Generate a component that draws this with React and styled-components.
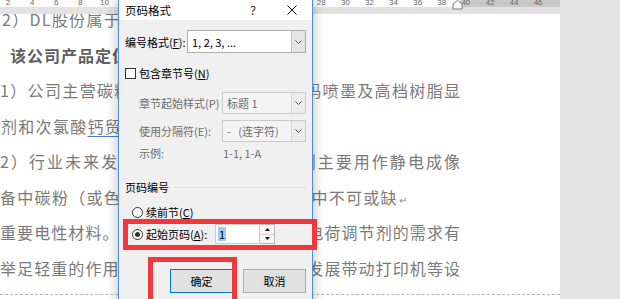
import React from "react";
import styled, { createGlobalStyle } from "styled-components";

const GlobalStyle = createGlobalStyle`
  html, body {
    margin: 0;
    padding: 0;
  }
  body {
    width: 620px;
    height: 299px;
    overflow: hidden;
    background: #e3e3e3;
  }
`

const cjk = `"Noto Sans CJK SC", "Noto Sans", sans-serif`

const Screen = styled.div`
  position: relative;
  width: 620px;
  height: 299px;
  overflow: hidden;
  background: #e3e3e3;
  font-family: ${cjk};
`

const Workspace = styled.div`
  display: flex;
  flex-direction: column;
  width: 560px;
  height: 100%;
`

const Ruler = styled.div`
  flex: none;
  display: flex;
  align-items: flex-start;
  height: 7px;
  overflow: hidden;
  background: linear-gradient(to right, #fcfcfc 0 460px, #c8c8c8 460px 100%);
`

const RulerNumber = styled.span`
  flex: none;
  width: 24.1px;
  margin-left: ${props => props.$first ? '-4px' : '0'};
  text-align: center;
  font-family: "Liberation Sans", sans-serif;
  font-size: 8px;
  line-height: 5px;
  color: #6a6a6a;
`

const IndentMarker = styled.svg`
  position: absolute;
  left: 452px;
  top: 0;
`

const RulerBand = styled.div`
  flex: none;
  height: 7px;
  background: #e2e2e2;
`

const Page = styled.div`
  flex: 1;
  display: flex;
  flex-direction: column;
  background: #fff;
  overflow: hidden;
`

const TextColumn = styled.div`
  display: flex;
  flex-direction: column;
  width: 460px;
  margin-top: -12px;
`

const DocLine = styled.div`
  flex: none;
  height: 35.5px;
  line-height: 35.5px;
  overflow: hidden;
  padding-left: ${props => props.$indent || 0}px;
  font-size: 16px;
  font-weight: ${props => props.$bold ? 700 : 400};
  color: ${props => props.$bold ? '#5e5e5e' : '#7a7a7a'};
  letter-spacing: ${props => props.$full ? '0' : (props.$spacing ?? 1.3) + 'px'};
  white-space: ${props => props.$full ? 'normal' : 'nowrap'};
  text-align: ${props => props.$full ? 'justify' : 'left'};
  text-align-last: ${props => props.$full ? 'justify' : 'auto'};
  text-justify: inter-character;
`

const Marked = styled.span`
  text-decoration: underline;
  text-decoration-color: #4a74d8;
  text-underline-offset: 3px;
`

const ReturnMark = styled.span`
  font-size: 10px;
  color: #8a8a8a;
  margin-left: 1px;
`

const DashedRule = styled.div`
  margin-top: 8px;
  width: 560px;
  border-top: 1px dashed #b4b4b4;
`

const Dialog = styled.div`
  position: absolute;
  left: 118px;
  top: -1px;
  width: 195px;
  height: 312px;
  box-sizing: border-box;
  display: flex;
  flex-direction: column;
  border: 1px solid #4d8fdb;
  background: #f0f0f0;
  box-shadow: 0 0 12px rgba(0, 0, 0, 0.28);
  font-size: 11px;
  color: #000;
`

const TitleBar = styled.div`
  flex: none;
  display: flex;
  align-items: center;
  height: 20px;
  padding-left: 6px;
  background: #fff;
`

const Title = styled.div`
  flex: 1;
  font-size: 11.5px;
`

const HelpButton = styled.div`
  width: 22px;
  margin-right: 8px;
  text-align: center;
  font-family: "Noto Sans", sans-serif;
  font-size: 12px;
  color: #222;
`

const CloseButton = styled.div`
  display: flex;
  align-items: center;
  justify-content: center;
  width: 40px;
  height: 20px;
`

const Body = styled.div`
  display: flex;
  flex-direction: column;
  padding: 10px 6px 0 6px;
`

const Row = styled.div`
  display: flex;
  align-items: center;
  height: ${props => props.$h}px;
  margin-top: ${props => props.$mt || 0}px;
  padding-left: ${props => props.$indent || 0}px;
  justify-content: ${props => props.$end ? 'flex-end' : 'flex-start'};
  gap: ${props => props.$gap || 0}px;
`

const Label = styled.div`
  flex: none;
  width: ${props => props.$w ? props.$w + 'px' : 'auto'};
  color: ${props => props.$disabled ? '#6d6d6d' : '#000'};
  white-space: nowrap;
`

const Select = styled.div`
  flex: none;
  display: flex;
  width: ${props => props.$w}px;
  height: ${props => props.$h}px;
  box-sizing: border-box;
  border: 1px solid ${props => props.$disabled ? '#cacaca' : '#acacac'};
  background: ${props => props.$disabled ? '#f4f4f4' : '#fff'};
  color: ${props => props.$disabled ? '#6d6d6d' : '#000'};
`

const SelectValue = styled.div`
  flex: 1;
  display: flex;
  align-items: center;
  padding-left: 4px;
  white-space: pre;
`

const SelectArrow = styled.div`
  flex: none;
  display: flex;
  align-items: center;
  justify-content: center;
  width: 13px;
  border-left: 1px solid ${props => props.$disabled ? '#d6d6d6' : '#c4c4c4'};
  background: ${props => props.$disabled ? '#ececec' : '#e5e5e5'};
`

const Checkbox = styled.div`
  flex: none;
  width: 11px;
  height: 11px;
  box-sizing: border-box;
  margin-right: 3px;
  border: 1px solid #333;
  background: #fff;
`

const Radio = styled.div`
  flex: none;
  display: flex;
  align-items: center;
  justify-content: center;
  width: 11px;
  height: 11px;
  box-sizing: border-box;
  margin-right: 3px;
  border: 1px solid #333;
  border-radius: 50%;
  background: #fff;

  &::after {
    content: "";
    display: ${props => props.$checked ? 'block' : 'none'};
    width: 5px;
    height: 5px;
    border-radius: 50%;
    background: #333;
  }
`

const GroupLine = styled.div`
  flex: 1;
  height: 1px;
  margin-left: 6px;
  background: #dcdcdc;
`

const NumberInput = styled.div`
  flex: none;
  display: flex;
  align-items: center;
  width: 45px;
  height: 20px;
  box-sizing: border-box;
  padding-left: 2px;
  border: 1px solid #c9c9c9;
  background: #fff;
`

const Selected = styled.span`
  padding: 0 1px;
  background: #9fcdf2;
  line-height: 14px;
`

const Spinner = styled.div`
  flex: none;
  display: flex;
  flex-direction: column;
  width: 15px;
  height: 20px;
  box-sizing: border-box;
  border: 1px solid #b9b9b9;
  border-left: none;
  background: #f7f7f7;
`

const SpinHalf = styled.div`
  flex: 1;
  display: flex;
  align-items: center;
  justify-content: center;
  border-top: ${props => props.$bottom ? '1px solid #d4d4d4' : 'none'};
`

const Button = styled.div`
  flex: none;
  display: flex;
  align-items: center;
  justify-content: center;
  width: 63px;
  height: 24px;
  box-sizing: border-box;
  border: 1px solid ${props => props.$primary ? '#0078d7' : '#adadad'};
  background: #e1e1e1;
`

const Highlight = styled.div`
  position: absolute;
  left: ${props => props.$x}px;
  top: ${props => props.$y}px;
  width: ${props => props.$w}px;
  height: ${props => props.$h}px;
  box-sizing: border-box;
  border: 5px solid #f2383c;
`

const Chevron = () => (
  <svg width="7" height="4" viewBox="0 0 7 4">
    <polyline points="0.5,0.5 3.5,3.5 6.5,0.5" fill="none" stroke="#555" strokeWidth="1"/>
  </svg>
)

const rulerNumbers = []
for (let n = 2; n <= 46; n += 2) rulerNumbers.push(n)

function App() {
  return (
    <Screen>
      <GlobalStyle/>
      <Workspace>
        <Ruler>
          {rulerNumbers.map((n, i) => <RulerNumber key={n} $first={i === 0}>{n}</RulerNumber>)}
        </Ruler>
        <RulerBand/>
        <Page>
          <TextColumn>
            <DocLine $indent={2}>2）DL股份属于上游原料供应企业。</DocLine>
            <DocLine $indent={10} $bold $spacing={1}>该公司产品定位与行业发展前景</DocLine>
            <DocLine $full>1）公司主营碳粉用电荷调节剂产品、喷码喷墨及高档树脂显</DocLine>
            <DocLine $indent={1}>剂和次氯酸<Marked>钙贸易</Marked>业务。</DocLine>
            <DocLine $full>2）行业未来发展前景广阔，电荷调节剂主要用作静电成像</DocLine>
            <DocLine>备中碳粉（或色粉）的关键成分，在生产中不可或缺<ReturnMark>↵</ReturnMark></DocLine>
            <DocLine $full>重要电性材料。随着行业的发展，市场对电荷调节剂的需求有</DocLine>
            <DocLine $full>举足轻重的作用。随着办公自动化行业的发展带动打印机等设</DocLine>
          </TextColumn>
          <DashedRule/>
        </Page>
      </Workspace>
      <IndentMarker width="11" height="10" viewBox="0 0 11 10">
        <polygon points="5.5,0.5 10,4 10,9 1,9 1,4" fill="#fff" stroke="#7a7a7a" strokeWidth="1"/>
      </IndentMarker>

      <Dialog>
        <TitleBar>
          <Title>页码格式</Title>
          <HelpButton>?</HelpButton>
          <CloseButton>
            <svg width="10" height="10" viewBox="0 0 10 10">
              <path d="M0.5 0.5 L9.5 9.5 M9.5 0.5 L0.5 9.5" stroke="#111" strokeWidth="1"/>
            </svg>
          </CloseButton>
        </TitleBar>
        <Body>
          <Row $h={23}>
            <Label $w={62}>编号格式(<u>F</u>):</Label>
            <Select $w={119} $h={23}>
              <SelectValue>1, 2, 3, ...</SelectValue>
              <SelectArrow><Chevron/></SelectArrow>
            </Select>
          </Row>
          <Row $h={14} $mt={13}>
            <Checkbox/>
            <Label>包含章节号(<u>N</u>)</Label>
          </Row>
          <Row $h={22} $mt={12} $indent={14}>
            <Label $w={83} $disabled>章节起始样式(P)</Label>
            <Select $w={84} $h={22} $disabled>
              <SelectValue>标题 1</SelectValue>
              <SelectArrow $disabled><Chevron/></SelectArrow>
            </Select>
          </Row>
          <Row $h={22} $mt={6} $indent={14}>
            <Label $w={83} $disabled>使用分隔符(E):</Label>
            <Select $w={84} $h={22} $disabled>
              <SelectValue>-   (连字符)</SelectValue>
              <SelectArrow $disabled><Chevron/></SelectArrow>
            </Select>
          </Row>
          <Row $h={14} $mt={4} $indent={14}>
            <Label $w={84} $disabled>示例:</Label>
            <Label $disabled>1-1, 1-A</Label>
          </Row>
          <Row $h={14} $mt={20}>
            <Label>页码编号</Label>
            <GroupLine/>
          </Row>
          <Row $h={14} $mt={11} $indent={7}>
            <Radio/>
            <Label>续前节(<u>C</u>)</Label>
          </Row>
          <Row $h={20} $mt={5} $indent={7}>
            <Radio $checked/>
            <Label $w={69}>起始页码(<u>A</u>):</Label>
            <NumberInput><Selected>1</Selected></NumberInput>
            <Spinner>
              <SpinHalf>
                <svg width="5" height="3" viewBox="0 0 5 3"><polygon points="2.5,0 5,3 0,3" fill="#111"/></svg>
              </SpinHalf>
              <SpinHalf $bottom>
                <svg width="5" height="3" viewBox="0 0 5 3"><polygon points="0,0 5,0 2.5,3" fill="#111"/></svg>
              </SpinHalf>
            </Spinner>
          </Row>
          <Row $h={24} $mt={25} $end $gap={10}>
            <Button $primary>确定</Button>
            <Button>取消</Button>
          </Row>
        </Body>
      </Dialog>

      <Highlight $x={123} $y={219} $w={194} $h={31}/>
      <Highlight $x={148} $y={257} $w={89} $h={50}/>
    </Screen>
  );
}

export default App;
